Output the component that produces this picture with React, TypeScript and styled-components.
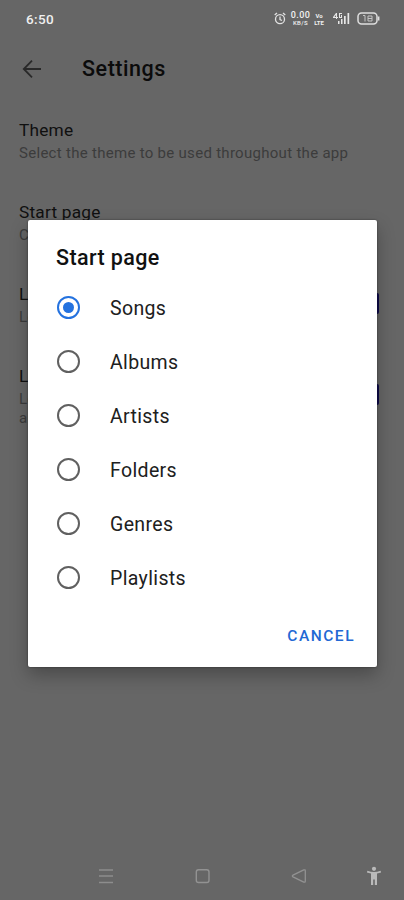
import React from "react";
import styled, { createGlobalStyle } from "styled-components";

const GlobalStyle = createGlobalStyle`
  * { box-sizing: border-box; }
  body { margin: 0; background: #666; font-family: Roboto, "Liberation Sans", sans-serif; }
`;

const Screen = styled.div`
  position: relative;
  display: flex;
  flex-direction: column;
  width: 404px;
  height: 900px;
  overflow: hidden;
  background: #666;
`;

const StatusBar = styled.header`
  display: flex;
  align-items: center;
  justify-content: space-between;
  height: 37px;
  padding: 0 24px 0 26px;
  color: #f0f0f0;
`;

const Clock = styled.span`
  font-size: 13.5px;
  font-weight: 500;
  letter-spacing: 0.35px;
`;

const StatusIcons = styled.div`
  display: flex;
  align-items: center;
`;

const Speed = styled.div`
  display: flex;
  flex-direction: column;
  align-items: center;
  width: 21px;
  margin-left: 4px;
  font-size: 9px;
  font-weight: 500;
  line-height: 8px;
  letter-spacing: 0.4px;
`;

const SpeedUnit = styled.span`
  font-size: 6px;
  line-height: 7px;
`;

const Volte = styled.div`
  display: flex;
  flex-direction: column;
  align-items: center;
  width: 10px;
  margin-left: 3px;
  font-size: 6px;
  font-weight: 700;
  line-height: 7px;
`;

const Signal = styled.svg`
  margin: 0 7px 0 9px;
`;

const AppBar = styled.div`
  display: flex;
  align-items: center;
  height: 63px;
  padding-left: 20px;
`;

const Title = styled.h1`
  margin: 1px 0 0 38px;
  font-size: 21.5px;
  font-weight: 500;
  letter-spacing: 0.55px;
  line-height: 28px;
  color: #0b0b0b;
`;

const Preferences = styled.main`
  flex: 1;
  padding: 19px 25px 0 19px;
`;

const Preference = styled.section<{ $height: number }>`
  display: flex;
  justify-content: space-between;
  height: ${(p) => p.$height}px;
`;

const PrefTitle = styled.div`
  font-size: 17.3px;
  line-height: 22px;
  letter-spacing: 0.2px;
  color: #101010;
`;

const PrefSummary = styled.div`
  margin-top: 3px;
  font-size: 15px;
  line-height: 19px;
  letter-spacing: 0.29px;
  color: #3c3c3c;
`;

const CheckMark = styled.span<{ $top: number }>`
  width: 20px;
  height: 21px;
  margin-top: ${(p) => p.$top}px;
  border-radius: 2px;
  background: #0e0b4c;
`;

const Dialog = styled.div`
  position: absolute;
  top: 220px;
  left: 28px;
  display: flex;
  flex-direction: column;
  width: 349px;
  height: 447px;
  border-radius: 2px;
  background: #fff;
  box-shadow: 0 0 2px rgba(0, 0, 0, 0.5), 0 8px 18px rgba(0, 0, 0, 0.28);
`;

const DialogTitle = styled.h2`
  margin: 24px 0 12px 28px;
  font-size: 21.5px;
  font-weight: 500;
  letter-spacing: 0.4px;
  line-height: 28px;
  color: #111;
`;

const Options = styled.div`
  display: flex;
  flex-direction: column;
  margin-top: -4px;
`;

const Option = styled.label`
  display: flex;
  align-items: center;
  height: 54px;
  padding-left: 29px;
  font-size: 19.5px;
  letter-spacing: 0.36px;
  color: #202020;
`;

const Radio = styled.span<{ $selected: boolean }>`
  display: grid;
  place-items: center;
  width: 23px;
  height: 23px;
  margin-right: 30px;
  border: 2px solid ${(p) => (p.$selected ? "#2472df" : "#606060")};
  border-radius: 50%;
  &::after {
    content: "";
    width: 11px;
    height: 11px;
    border-radius: 50%;
    background: ${(p) => (p.$selected ? "#2472df" : "transparent")};
  }
`;

const OptionLabel = styled.span`
  position: relative;
  top: 1px;
`;

const Cancel = styled.button`
  align-self: flex-end;
  margin: 21px 22px 0 0;
  padding: 0;
  border: 0;
  background: none;
  font: 500 15.5px/22px Roboto, "Liberation Sans", sans-serif;
  letter-spacing: 1.5px;
  color: #2268d4;
`;

const NavBar = styled.nav`
  display: grid;
  grid-template-columns: 97px 97px 74px 1fr;
  align-items: center;
  height: 49px;
  padding-left: 97px;
`;

const pages = ["Songs", "Albums", "Artists", "Folders", "Genres", "Playlists"];

export default function App() {
  return (
    <Screen>
      <GlobalStyle />
      <StatusBar>
        <Clock>6:50</Clock>
        <StatusIcons>
          <svg width="12" height="13" viewBox="0 0 12 13" fill="none" stroke="#e2e2e2" strokeWidth="1.3">
            <circle cx="6" cy="7.2" r="4.5" />
            <path d="M.7 3 3 1M11.3 3 9 1M6 4.5v3l2 1" />
          </svg>
          <Speed>
            <span>0.00</span>
            <SpeedUnit>KB/S</SpeedUnit>
          </Speed>
          <Volte>
            <span>Vo</span>
            <span>LTE</span>
          </Volte>
          <Signal width="17" height="13" viewBox="0 0 17 13" fill="#e6e6e6">
            <path d="M3 1 0 5v1h3v1h1V6h1V5H4V1zM3 3v2H1.5zM6 1h3v1H7v3h1V3h1v3H6zM5 9h1.5v3H5zM8 7h1.5v5H8zM11 4h1.7v8H11zM14.5 1h1.7v11h-1.7z" />
          </Signal>
          <svg width="23" height="13" viewBox="0 0 23 13" fill="none" stroke="#dedede" strokeWidth="1.5">
            <rect x="1" y="1" width="19" height="11" rx="3.5" />
            <path d="M21.7 4.5v4" />
            <path d="M6 3.5h2v6M11 4h4v5h-4zM11 6.5h4" strokeWidth="1" stroke="#c4c4c4" />
          </svg>
        </StatusIcons>
      </StatusBar>
      <AppBar>
        <svg width="24" height="24" viewBox="0 0 24 24" fill="none" stroke="#292929" strokeWidth="1.8">
          <path d="M21 12H4M12 3.7 3.8 12l8.2 8.3" />
        </svg>
        <Title>Settings</Title>
      </AppBar>
      <Preferences>
        <Preference $height={82}>
          <div>
            <PrefTitle>Theme</PrefTitle>
            <PrefSummary>Select the theme to be used throughout the app</PrefSummary>
          </div>
        </Preference>
        <Preference $height={82}>
          <div>
            <PrefTitle>Start page</PrefTitle>
            <PrefSummary>C</PrefSummary>
          </div>
        </Preference>
        <Preference $height={82}>
          <div>
            <PrefTitle>L</PrefTitle>
            <PrefSummary>Lo</PrefSummary>
          </div>
          <CheckMark $top={10} />
        </Preference>
        <Preference $height={82}>
          <div>
            <PrefTitle>L</PrefTitle>
            <PrefSummary>
              Lo
              <br />
              ar
            </PrefSummary>
          </div>
          <CheckMark $top={19} />
        </Preference>
      </Preferences>
      <NavBar>
        <svg width="18" height="18" viewBox="0 0 18 18" stroke="#8d8d8d" strokeWidth="1.4">
          <path d="M2 3h14M2 9h14M2 15.5h14" />
        </svg>
        <svg width="18" height="18" viewBox="0 0 18 18" fill="none" stroke="#929292" strokeWidth="1.4">
          <rect x="2.3" y="2.8" width="12.7" height="12.7" rx="2.2" />
        </svg>
        <svg width="18" height="18" viewBox="0 0 18 18" fill="none" stroke="#929292" strokeWidth="1.3" strokeLinejoin="round">
          <path d="M2 8.1 12.8 2.9q1.5-.5 1.5 1v10.2q0 1.5-1.5 1L2 9.9q-1.3-.9 0-1.8z" />
        </svg>
        <svg width="18" height="20" viewBox="0 0 18 20" fill="#bababa">
          <circle cx="9" cy="2.8" r="2.1" />
          <path d="M2.4 4.7Q9 7.3 15.6 4.7l.5 1.7-4.1 1.1V19H9.8v-5.4H8.2V19H6V7.5L1.9 6.4z" />
        </svg>
      </NavBar>
      <Dialog role="dialog" aria-label="Start page">
        <DialogTitle>Start page</DialogTitle>
        <Options role="radiogroup">
          {pages.map((page, index) => (
            <Option key={page}>
              <Radio $selected={index === 0} role="radio" aria-checked={index === 0} />
              <OptionLabel>{page}</OptionLabel>
            </Option>
          ))}
        </Options>
        <Cancel>CANCEL</Cancel>
      </Dialog>
    </Screen>
  );
}
